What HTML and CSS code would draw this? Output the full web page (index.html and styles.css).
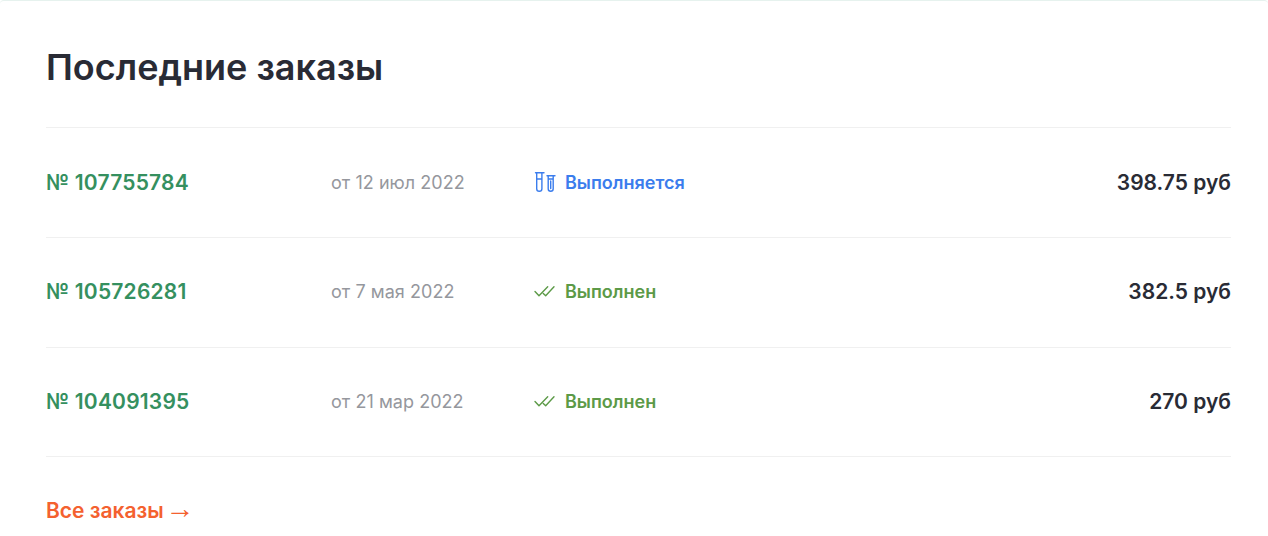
FILE: index.html
```html
<!DOCTYPE html>
<html lang="ru">
<head>
<meta charset="utf-8">
<title>Последние заказы</title>
<link rel="stylesheet" href="styles.css">
</head>
<body>
<section class="card">
  <h2 class="title">Последние заказы</h2>
  <ul class="orders">
    <li class="order">
      <a class="order-num" href="#">№ 107755784</a>
      <span class="order-date">от 12 июл 2022</span>
      <span class="status status-progress">
        <svg class="status-icon" width="22" height="22" viewBox="0 0 22 22" fill="none" stroke="currentColor" stroke-width="1.4" stroke-linecap="round" stroke-linejoin="round"><path d="M1.5 1.7h8.5M2.7 1.7v16a2.6 2.6 0 0 0 5.2 0v-16M2.7 8h5.2M13 4.7h8M14.2 4.7v13a2.5 2.5 0 0 0 5 0v-13M14.2 8h5M16.7 10v7.5"/></svg>
        Выполняется
      </span>
      <span class="order-sum">398.75 руб</span>
    </li>
    <li class="order">
      <a class="order-num" href="#">№ 105726281</a>
      <span class="order-date">от 7 мая 2022</span>
      <span class="status status-done">
        <svg class="status-icon" width="22" height="22" viewBox="0 0 22 22" fill="none" stroke="currentColor" stroke-width="1.4" stroke-linecap="round" stroke-linejoin="round"><path d="M1 10.5l4 4.3 8.7-9M9.3 12.5l2.4 2.3 8.3-9"/></svg>
        Выполнен
      </span>
      <span class="order-sum">382.5 руб</span>
    </li>
    <li class="order">
      <a class="order-num" href="#">№ 104091395</a>
      <span class="order-date">от 21 мар 2022</span>
      <span class="status status-done">
        <svg class="status-icon" width="22" height="22" viewBox="0 0 22 22" fill="none" stroke="currentColor" stroke-width="1.4" stroke-linecap="round" stroke-linejoin="round"><path d="M1 10.5l4 4.3 8.7-9M9.3 12.5l2.4 2.3 8.3-9"/></svg>
        Выполнен
      </span>
      <span class="order-sum">270 руб</span>
    </li>
  </ul>
  <a class="all-link" href="#">Все заказы <span class="arrow">→</span></a>
</section>
</body>
</html>
```
FILE: styles.css
```css
* { box-sizing: border-box; }
html, body { margin: 0; padding: 0; background: #fff; }
body { font-family: Inter, "Noto Sans", sans-serif; color: #292b35; overflow: hidden; }
.card {
  height: 536px;
  padding: 43px 37px 0 46px;
  border-top: 1px solid #e6f2ee;
  border-radius: 4px 4px 0 0;
}
.title {
  margin: 0 0 36px;
  font-size: 36px;
  line-height: 47px;
  font-weight: 600;
}
.orders { list-style: none; margin: 0; padding: 0; border-top: 1px solid #f0f0f0; }
.order {
  display: flex;
  align-items: center;
  height: 109.75px;
  padding-bottom: 0.4px;
  border-bottom: 1px solid #f0f0f0;
}
.order-num { width: 285px; font-size: 21px; letter-spacing: 0.2px; font-weight: 600; color: #35905f; text-decoration: none; }
.order-date { width: 203px; font-size: 18px; letter-spacing: 0.05px; color: #95979d; }
.status { display: flex; align-items: center; gap: 9px; font-size: 18px; font-weight: 600; }
.status-icon { flex: none; }
.status-progress { color: #3b7ded; }
.status-done { color: #5c9a47; }
.order-sum { margin-left: auto; font-size: 21px; font-weight: 600; }
.all-link { display: inline-block; margin-top: 41px; font-size: 21px; font-weight: 600; color: #f4612f; text-decoration: none; }
.arrow { margin-left: -3.5px; font-family: "Liberation Sans", sans-serif; font-size: 29px; line-height: 0; font-weight: 400; }
```
